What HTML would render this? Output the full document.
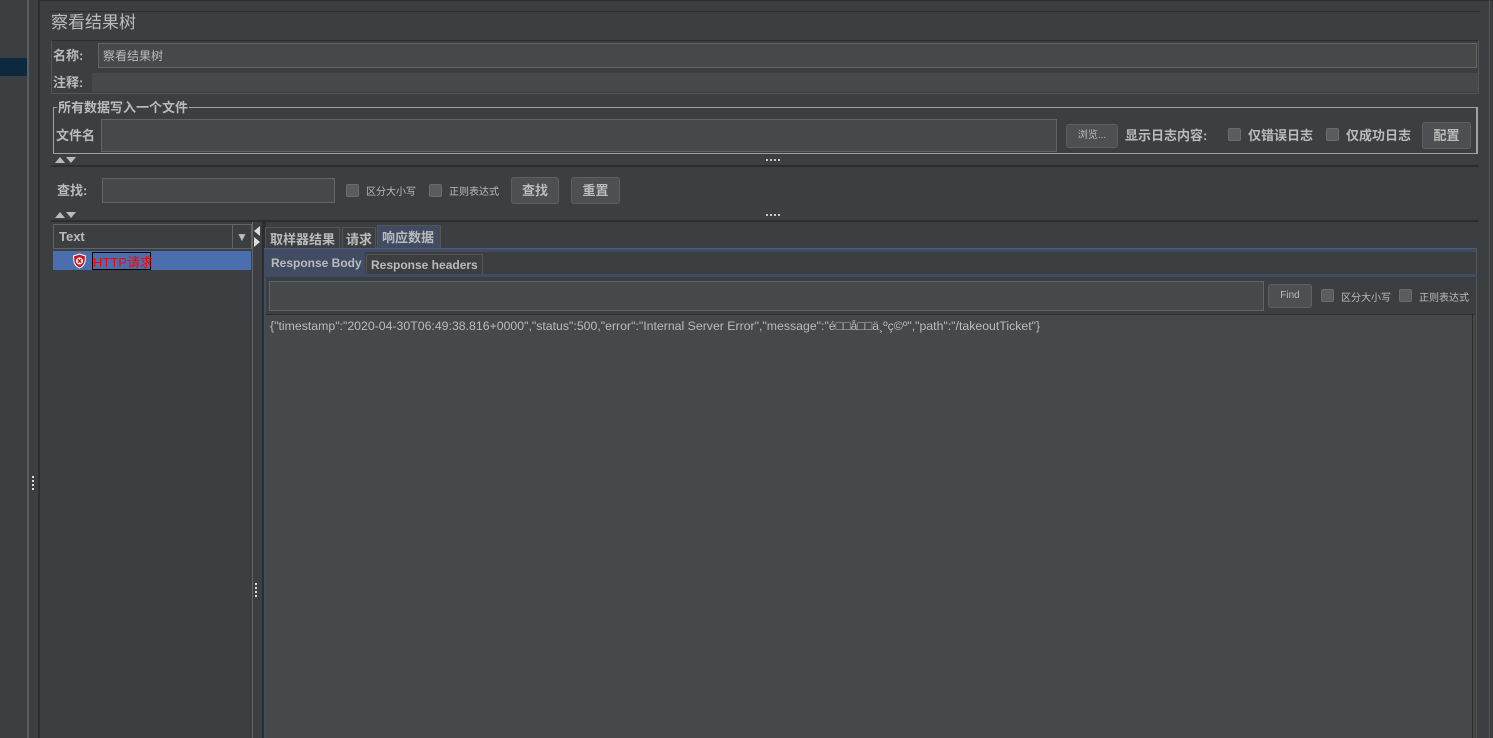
<!DOCTYPE html>
<html><head><meta charset="utf-8"><style>
*{margin:0;padding:0;box-sizing:border-box}
body{width:1493px;height:738px;background:#3c3f41;position:relative;overflow:hidden;font-family:"Liberation Sans","Noto Sans CJK SC",sans-serif;color:#bbbbbb}
.a{position:absolute}
.f{position:absolute;background:#45494a;border:1px solid #646464}
.t{position:absolute;font-size:13px;white-space:nowrap;color:#bbbbbb;line-height:15px}
.c{margin-top:-1px}
.b{position:absolute;background:#4c5052;border:1px solid #5e6060;border-radius:3px;font-size:13px;text-align:center;color:#bbbbbb}
.cb{position:absolute;width:13px;height:13px;background:#5a5d5f;border:1px solid #6b6b6b;border-radius:2px}
.bold{font-weight:bold}
.arr{position:absolute;width:0;height:0;border-left:5px solid transparent;border-right:5px solid transparent}
</style></head><body>
<div class="a" style="left:0;top:58px;width:27px;height:18px;background:#0d293e"></div>
<div class="a" style="left:27px;top:0;width:2px;height:738px;background:#595c5e"></div>
<div class="a" style="left:38px;top:0;width:2px;height:738px;background:#2b2d2e"></div>
<div class="a" style="left:50px;top:0;width:4px;height:738px;background:#2b2d2e"></div>
<div class="a" style="left:32px;top:476px;width:4px;height:14px;border-left:2px dotted #ddd"></div>
<div class="a" style="left:40px;top:0;width:1453px;height:738px;background:#3c3f41;border-top:1px solid #2b2d2e"></div>
<div class="a" style="left:1489px;top:0;width:1px;height:738px;background:#555"></div>
<div class="a" style="left:50px;top:11px;width:1430px;height:1px;background:#2b2d2e"></div>
<div class="t c" style="left:51px;top:14px;font-size:17px;line-height:19px">察看结果树</div>
<div class="a" style="left:51px;top:40px;width:1428px;height:54px;border:1px solid #555;border-top-color:#2b2d2e"></div>
<div class="t bold c" style="left:53px;top:49px">名称:</div>
<div class="f" style="left:98px;top:43px;width:1379px;height:25px"></div>
<div class="t c" style="left:103px;top:50px;font-size:12px">察看结果树</div>
<div class="t bold c" style="left:53px;top:76px">注释:</div>
<div class="a" style="left:92px;top:73px;width:1386px;height:19px;background:#45494a"></div>
<div class="a" style="left:53px;top:107px;width:1424px;height:47px;border:1px solid #a0a0a0;border-bottom:none"></div>
<div class="t bold c" style="left:57px;top:101px;background:#3c3f41;padding:0 1px">所有数据写入一个文件</div>
<div class="t bold c" style="left:56px;top:129px">文件名</div>
<div class="f" style="left:101px;top:119px;width:956px;height:33px"></div>
<div class="b" style="left:1066px;top:124px;width:52px;height:24px;font-size:10px;line-height:22px">浏览...</div>
<div class="t bold c" style="left:1125px;top:129px">显示日志内容:</div>
<div class="cb" style="left:1228px;top:128px"></div>
<div class="t bold c" style="left:1248px;top:129px">仅错误日志</div>
<div class="cb" style="left:1326px;top:128px"></div>
<div class="t bold c" style="left:1346px;top:129px">仅成功日志</div>
<div class="b bold" style="left:1422px;top:122px;width:49px;height:27px;line-height:25px">配置</div>
<div class="a" style="left:1477px;top:107px;width:1px;height:47px;background:#a0a0a0"></div>
<div class="a" style="left:53px;top:153px;width:1425px;height:1px;background:#a0a0a0"></div>
<div class="arr" style="left:55px;top:157px;border-bottom:6px solid #bbb"></div>
<div class="arr" style="left:66px;top:157px;border-top:6px solid #bbb"></div>
<div class="a" style="left:766px;top:159px;width:14px;height:4px;border-top:2px dotted #ccc"></div>
<div class="a" style="left:51px;top:165px;width:1428px;height:2px;background:#2b2d2e"></div>
<div class="t bold c" style="left:57px;top:184px">查找:</div>
<div class="f" style="left:102px;top:178px;width:233px;height:25px"></div>
<div class="cb" style="left:346px;top:184px"></div>
<div class="t c" style="left:366px;top:186px;font-size:10px">区分大小写</div>
<div class="cb" style="left:429px;top:184px"></div>
<div class="t c" style="left:449px;top:186px;font-size:10px">正则表达式</div>
<div class="b bold" style="left:511px;top:177px;width:48px;height:27px;line-height:25px">查找</div>
<div class="b bold" style="left:571px;top:177px;width:49px;height:27px;line-height:25px">重置</div>
<div class="arr" style="left:55px;top:212px;border-bottom:6px solid #bbb"></div>
<div class="arr" style="left:66px;top:212px;border-top:6px solid #bbb"></div>
<div class="a" style="left:766px;top:214px;width:14px;height:4px;border-top:2px dotted #ccc"></div>
<div class="a" style="left:51px;top:220px;width:1428px;height:2px;background:#2b2d2e"></div>
<div class="a" style="left:53px;top:224px;width:199px;height:25px;border:1px solid #646464;background:#3c3f41"></div>
<div class="t bold" style="left:59px;top:229px">Text</div>
<div class="a" style="left:232px;top:225px;width:1px;height:23px;background:#646464"></div>
<div class="t" style="left:236px;top:230px;font-size:12px">▼</div>
<div class="a" style="left:53px;top:251px;width:198px;height:19px;background:#4b6eaf"></div>
<svg class="a" style="left:72px;top:253px" width="15" height="16" viewBox="0 0 15 16"><path d="M7.5 1 L13.5 3 L13 9 Q12 13 7.5 15 Q3 13 2 9 L1.5 3 Z" fill="#c8161d" stroke="#fff" stroke-width="1"/><circle cx="7.5" cy="8" r="3.5" fill="#fff"/><path d="M5.8 6.3 L9.2 9.7 M9.2 6.3 L5.8 9.7" stroke="#c8161d" stroke-width="1.4"/></svg>
<div class="a" style="left:92px;top:252px;width:59px;height:18px;border:1px solid #000"></div>
<div class="t c" style="left:93px;top:256px;color:#ff0000">HTTP请求</div>
<div class="a" style="left:252px;top:222px;width:1px;height:516px;background:#646464"></div>
<div class="a" style="left:262px;top:222px;width:4px;height:516px;background:#2b2d2e"></div>
<div class="a" style="left:255px;top:583px;width:4px;height:14px;border-left:2px dotted #ddd"></div>
<div class="a" style="left:254px;top:226px;width:0;height:0;border-top:5px solid transparent;border-bottom:5px solid transparent;border-right:6px solid #ddd"></div>
<div class="a" style="left:254px;top:237px;width:0;height:0;border-top:5px solid transparent;border-bottom:5px solid transparent;border-left:6px solid #ddd"></div>
<div class="a" style="left:265px;top:227px;width:75px;height:22px;border:1px solid #555;border-bottom:none;background:#3c3f41"></div>
<div class="t bold c" style="left:270px;top:233px">取样器结果</div>
<div class="a" style="left:342px;top:227px;width:34px;height:22px;border:1px solid #555;border-bottom:none"></div>
<div class="t bold c" style="left:346px;top:233px">请求</div>
<div class="a" style="left:377px;top:225px;width:64px;height:24px;background:#414c63;border:1px solid #555;border-bottom:none"></div>
<div class="t bold c" style="left:382px;top:231px">响应数据</div>
<div class="a" style="left:264px;top:248px;width:1213px;height:4px;background:#414c63;border-top:1px solid #4e5c7e"></div>
<div class="a" style="left:1476px;top:248px;width:1px;height:490px;background:#555"></div>
<div class="a" style="left:264px;top:252px;width:2px;height:486px;background:#414c63"></div>
<div class="a" style="left:265px;top:251px;width:100px;height:24px;background:#414c63"></div>
<div class="t bold" style="left:271px;top:256px;font-size:12px">Response Body</div>
<div class="a" style="left:366px;top:254px;width:117px;height:21px;border:1px solid #555;border-bottom:none"></div>
<div class="t bold" style="left:371px;top:258px;font-size:12px">Response headers</div>
<div class="a" style="left:264px;top:274px;width:1213px;height:3px;background:#414c63"></div>
<div class="a" style="left:266px;top:277px;width:1209px;height:461px;background:#45494a"></div>
<div class="a" style="left:266px;top:277px;width:1209px;height:37px;background:#3c3f41"></div>
<div class="f" style="left:269px;top:281px;width:995px;height:30px"></div>
<div class="b" style="left:1268px;top:284px;width:44px;height:24px;font-size:10px;line-height:22px">Find</div>
<div class="cb" style="left:1321px;top:289px"></div>
<div class="t c" style="left:1341px;top:292px;font-size:10px">区分大小写</div>
<div class="cb" style="left:1399px;top:289px"></div>
<div class="t c" style="left:1419px;top:292px;font-size:10px">正则表达式</div>
<div class="a" style="left:266px;top:314px;width:1209px;height:1px;background:#2b2d2e"></div>
<div class="a" style="left:1472px;top:315px;width:1px;height:423px;background:#2b2d2e"></div>
<div class="t" style="left:270px;top:319px;font-size:12.3px">{"timestamp":"2020-04-30T06:49:38.816+0000","status":500,"error":"Internal Server Error","message":"é□□å□□ä¸ºç©º","path":"/takeoutTicket"}</div>
</body></html>
